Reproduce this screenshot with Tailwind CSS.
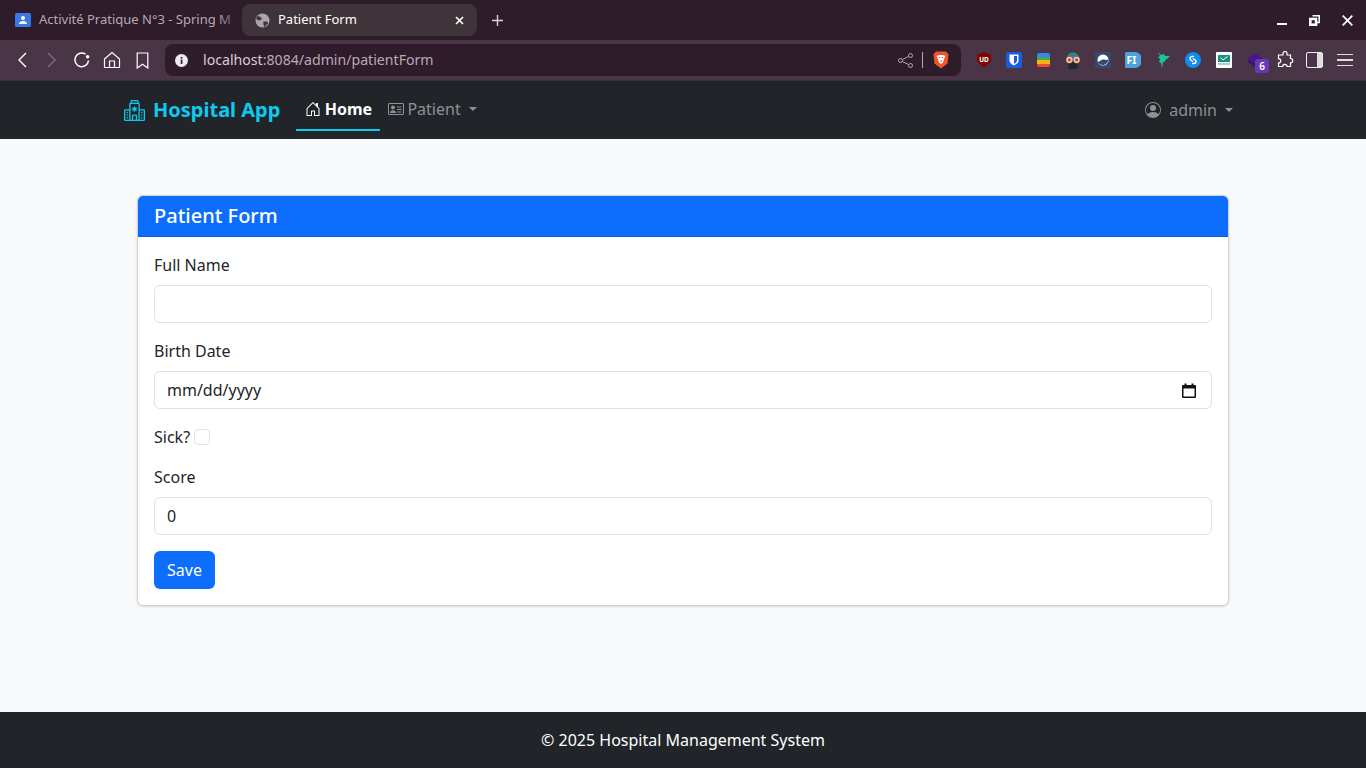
<!DOCTYPE html>
<html lang="en">
<head>
    <meta charset="UTF-8">
    <title>Patient Form</title>
    <script src="https://cdn.jsdelivr.net/npm/@tailwindcss/browser@4"></script>
</head>
<body class="h-[768px] w-[1366px] overflow-hidden flex flex-col bg-[#f8f9fa] font-['Noto_Sans',sans-serif] text-[#212529]">

    <!-- Tab strip -->
    <div class="h-10 bg-[#2e1c2b] flex items-center pl-[15px] shrink-0">
        <div class="relative w-[227px] flex items-center text-[13px] text-[#b5a9b3]">
            <svg class="w-4 h-4 shrink-0 mr-2" viewBox="0 0 16 16"><rect y="1" width="16" height="14" rx="1.5" fill="#3b78e7"/><circle cx="8" cy="6" r="2" fill="#fff"/><path d="M4 12c0-2 2-3 4-3s4 1 4 3z" fill="#fff"/></svg>
            <span class="whitespace-nowrap">Activité Pratique N°3 - Spring M</span>
            <div class="absolute right-0 top-0 bottom-0 w-[24px] bg-linear-to-r from-transparent to-[#2e1c2b]"></div>
        </div>
        <div class="w-[235px] h-8 bg-[#3f3439] rounded-lg flex items-center px-[13px] text-[13px] text-white">
            <svg class="w-[15px] h-[15px] shrink-0 mr-[8px]" viewBox="0 0 16 16"><circle cx="8" cy="8" r="7.5" fill="#a9a5a8"/><path d="M3 3l4 2 0 2-3 1-3-2zM9 9l4 0 1 2-4 4-1-3z" fill="#3f3439"/></svg>
            <span class="flex-1">Patient Form</span>
            <svg class="w-[9px] h-[9px]" viewBox="0 0 9 9" stroke="#fff" stroke-width="1.7"><path d="M1 1l7 7M8 1l-7 7"/></svg>
        </div>
        <svg class="w-[11px] h-[11px] ml-[15px]" viewBox="0 0 11 11" stroke="#d8d2d6" stroke-width="1.4"><path d="M5.5 0v11M0 5.500h11"/></svg>
        <div class="ml-auto flex items-center gap-[22px] pr-[13px]">
            <div class="w-[10px] h-[2px] bg-white mt-[7px]"></div>
            <svg class="w-[11px] h-[11px]" viewBox="0 0 11 11" fill="none" stroke="#fff" stroke-width="1.6"><path d="M3.5.8h6.700v6.700H7.500"/><rect x=".8" y="3.500" width="6.700" height="6.700" fill="#fff" stroke="#fff"/><rect x="2.600" y="5.200" width="3.200" height="3.200" fill="#2e1c2b" stroke="none"/></svg>
            <svg class="w-[11px] h-[11px]" viewBox="0 0 11 11" stroke="#fff" stroke-width="1.8"><path d="M.7.7l9.600 9.600M10.300.7L.7 10.300"/></svg>
        </div>
    </div>

    <!-- Toolbar -->
    <div class="bg-[#4a3547] flex items-center pl-[17px] shrink-0 border-b border-[#3a3039] box-content h-[40px]">
        <svg class="w-[10px] h-[16px]" viewBox="0 0 10 16" fill="none" stroke="#fff" stroke-width="1.4"><path d="M9 1L2 8l7 7"/></svg>
        <svg class="w-[10px] h-[16px] ml-[20px]" viewBox="0 0 10 16" fill="none" stroke="#7f6c7c" stroke-width="1.4"><path d="M1 1l7 7-7 7"/></svg>
        <svg class="w-[18px] h-[18px] ml-[16px]" viewBox="0 0 18 18" fill="none" stroke="#fff" stroke-width="1.5"><path d="M15.500 9.500A6.800 6.800 0 1 1 12.500 3.200"/><circle cx="14.600" cy="5.800" r="1.800" fill="#fff" stroke="none"/></svg>
        <svg class="w-[18px] h-[18px] ml-[12px]" viewBox="0 0 18 18" fill="none" stroke="#fff" stroke-width="1.2"><path d="M1.500 8L9 1.500 16.500 8v8.500h-15zM6.500 16.500v-6.500h5v6.500"/></svg>
        <svg class="w-[13px] h-[17px] ml-[15px]" viewBox="0 0 13 17" fill="none" stroke="#fff" stroke-width="1.2"><path d="M1.200 1h10.600v15l-5.300-3.800-5.300 3.800z"/></svg>
        <!-- Address bar -->
        <div class="w-[796px] h-8 ml-[16px] bg-[#2e1c2b] rounded-lg flex items-center pl-[10px] pr-[12px]">
            <svg class="w-[13px] h-[13px]" viewBox="0 0 13 13"><circle cx="6.500" cy="6.500" r="6.500" fill="#f0e8ee"/><rect x="5.700" y="5.500" width="1.700" height="4.500" fill="#2e1c2b"/><rect x="5.700" y="3" width="1.700" height="1.600" fill="#2e1c2b"/></svg>
            <span class="ml-[15px] text-[14.130px] text-[#d9cdd6] flex-1">localhost<span class="text-[#b9aab5]">:8084/admin/patientForm</span></span>
            <svg class="w-[15px] h-[15px]" viewBox="0 0 15 15" fill="none" stroke="#b4a6b0" stroke-width="1"><circle cx="2.500" cy="7.500" r="2"/><circle cx="12.500" cy="2.500" r="2"/><circle cx="12.500" cy="12.500" r="2"/><path d="M4.300 6.600l6.400-3.200M4.300 8.400l6.400 3.200"/></svg>
            <div class="w-px h-4 bg-[#b4a6b0] ml-[9px] mr-[10px]"></div>
            <svg class="w-[16px] h-[18px]" viewBox="0 0 16 18"><path d="M3 .5h10l2.500 3-1 9L8 17.500 1.500 12.500l-1-9z" fill="#f1562b"/><path d="M3.500 5l2.500-1h4l2.500 1-1.500 3-1 3.500-2 1.500-2-1.500-1-3.500z" fill="#fff"/><path d="M6 6.500h1.200M8.800 6.500H10M7 10h2" stroke="#f1562b" stroke-width="1"/></svg>
        </div>
        <!-- Extensions -->
        <div class="flex items-center ml-[15px] h-full">
            <svg class="w-4 h-4" viewBox="0 0 16 16"><path d="M8 0l7 2.500v7L8 16 1 9.500v-7z" fill="#800404"/><text x="8" y="10" font-size="6.500" font-weight="700" fill="#fff" text-anchor="middle" font-family="Noto Sans">UD</text></svg>
            <svg class="w-4 h-4 ml-[14px]" viewBox="0 0 16 16"><rect width="16" height="16" rx="2" fill="#175ddc"/><path d="M3.500 2.500h9v6c0 2.500-2.500 4-4.500 5-2-1-4.500-2.500-4.500-5z" fill="#fff"/><path d="M8 4h3v4.500c0 1.500-1.500 2.500-3 3.300z" fill="#175ddc"/></svg>
            <div class="w-[13px] h-[14px] ml-[15px] flex flex-col rounded-[2px] overflow-hidden">
                <div class="flex-1 bg-[#3b82f6]"></div><div class="flex-1 bg-[#3fae49]"></div><div class="flex-1 bg-[#f5b31a]"></div><div class="flex-1 bg-[#ef4a35]"></div>
            </div>
            <svg class="w-[18px] h-[18px] ml-[14px]" viewBox="0 0 16 16"><path d="M2 8a6 7 0 0 1 12 0z" fill="#3b7f8c"/><rect x="4" y="10" width="8" height="6" rx="1" fill="#23282c"/><circle cx="4.800" cy="8" r="2.800" fill="#f3c2a8"/><circle cx="11.200" cy="8" r="2.800" fill="#f3c2a8"/><circle cx="4.800" cy="8" r="1.300" fill="#c83c2a"/><circle cx="11.200" cy="8" r="1.300" fill="#c83c2a"/></svg>
            <svg class="w-4 h-4 ml-[13px]" viewBox="0 0 16 16"><rect width="16" height="16" rx="1" fill="#34496e"/><circle cx="8" cy="8" r="5.500" fill="#fff"/><path d="M2.800 9.500c2 1 3-2 5.500-2 2 0 2.500 1 5 0-.3 3-2.500 5.500-5.300 5.500S3.300 11.500 2.800 9.500z" fill="#34496e"/></svg>
            <svg class="w-4 h-4 ml-[14px]" viewBox="0 0 16 16"><path d="M1.500 0H10a7 8 0 0 1 0 16H1.500A1.500 1.500 0 0 1 0 14.500v-13A1.500 1.500 0 0 1 1.500 0z" fill="#4aa3e0"/><text x="6.500" y="12" font-size="10.500" font-weight="700" fill="#fff" text-anchor="middle" font-family="Noto Sans">FI</text></svg>
            <svg class="w-4 h-4 ml-[14px]" viewBox="0 0 16 16"><path d="M3 0l3 3 3-1 1 2 5 0-3 3-2 1 1 1-3 1-1 6-1-5-2-1 1-3-2-2 2-1z" fill="#16c79a"/></svg>
            <svg class="w-4 h-4 ml-[14px]" viewBox="0 0 16 16"><circle cx="8" cy="8" r="8" fill="#0f8cf0"/><path d="M9 4.500H7a2 2 0 0 0-1.500 3.300L8 9.500M7 11.500h2a2 2 0 0 0 1.500-3.300L8 6.500" fill="none" stroke="#fff" stroke-width="1.500"/></svg>
            <svg class="w-4 h-4 ml-[15px]" viewBox="0 0 16 16"><rect width="16" height="16" rx="1" fill="#fff"/><rect x="2" y="3" width="12" height="7" fill="#1b8f80"/><path d="M4.500 5.500l2.500 2.500 4.500-3.500" fill="none" stroke="#fff" stroke-width="1"/><rect x="2" y="11" width="12" height="2" fill="#9fd6cc"/></svg>
            <div class="relative w-4 h-4 ml-[15px]">
                <svg class="w-4 h-4" viewBox="0 0 16 16"><path d="M8 1l7 5-7 5-7-5z" fill="#4a148c"/><path d="M1 7l7 5 7-5v3l-7 5-7-5z" fill="#3a1080"/></svg>
                <div class="absolute left-[8px] top-[7px] w-[14px] h-[14px] bg-[#6639ba] rounded-[3px] text-white text-[10px] font-semibold flex items-center justify-center leading-none">6</div>
            </div>
        </div>
        <svg class="w-[18px] h-[18px] ml-[13px]" viewBox="0 0 18 18" fill="none" stroke="#fff" stroke-width="1.200"><path d="M7 2.500a2 2 0 0 1 4 0V4h3.500v3.500a2.200 2.200 0 0 1 0 4.400V15.500H11a2.200 2.200 0 0 0-4.400 0H2.500V12a2.200 2.200 0 0 0 0-4.400V4H7z"/></svg>
        <div class="w-[17px] h-[16px] ml-[12px] border-[1.500px] border-[#eee] rounded-[2px] flex justify-end"><div class="w-[5px] h-full bg-[#ddd]"></div></div>
        <div class="ml-[14px] w-4 flex flex-col gap-[4px]">
            <div class="h-[1.500px] bg-[#ddd]"></div><div class="h-[1.500px] bg-[#ddd]"></div><div class="h-[1.500px] bg-[#ddd]"></div>
        </div>
    </div>

    <!-- Navbar -->
    <nav class="h-[58px] bg-[#212529] flex items-center pl-[124px] shrink-0">
        <svg class="w-[21px] h-[21px] text-[#0dcaf0]" viewBox="0 0 16 16" fill="currentColor"><path d="M8.500 5.034v1.100l.953-.55.5.867L9 7l.953.55-.5.866-.953-.55v1.100h-1v-1.100l-.953.55-.5-.866L7 7l-.953-.55.5-.866.953.55v-1.100zM13.250 9a.250.250 0 0 0-.250.250v.500c0 .138.112.250.250.250h.500a.250.250 0 0 0 .250-.250v-.500a.250.250 0 0 0-.250-.250zM13 11.250a.250.250 0 0 1 .250-.250h.500a.250.250 0 0 1 .250.250v.500a.250.250 0 0 1-.250.250h-.500a.250.250 0 0 1-.250-.250zm.250 1.750a.250.250 0 0 0-.250.250v.500c0 .138.112.250.250.250h.500a.250.250 0 0 0 .250-.250v-.500a.250.250 0 0 0-.250-.250zm-11-4a.250.250 0 0 0-.250.250v.500c0 .138.112.250.250.250h.500A.250.250 0 0 0 3 9.750v-.500A.250.250 0 0 0 2.750 9zm0 2a.250.250 0 0 0-.250.250v.500c0 .138.112.250.250.250h.500a.250.250 0 0 0 .250-.250v-.500a.250.250 0 0 0-.250-.250zM2 13.250a.250.250 0 0 1 .250-.250h.500a.250.250 0 0 1 .250.250v.500a.250.250 0 0 1-.250.250h-.500a.250.250 0 0 1-.250-.250z"/><path d="M5 1a1 1 0 0 1 1-1h4a1 1 0 0 1 1 1v1a1 1 0 0 1 1 1v4h3a1 1 0 0 1 1 1v7a1 1 0 0 1-1 1H1a1 1 0 0 1-1-1V8a1 1 0 0 1 1-1h3V3a1 1 0 0 1 1-1zm2 14h2v-3H7zm3 0h1V3H5v12h1v-3a1 1 0 0 1 1-1h2a1 1 0 0 1 1 1zm0-14H6v1h4zm2 7v7h3V8zm-8 7V8H1v7z"/></svg>
        <span class="ml-[8px] text-xl font-bold text-[#0dcaf0] whitespace-nowrap">Hospital App</span>
        <a class="ml-4 h-[42px] w-[84px] flex items-center justify-center gap-[4px] border-b-2 border-[#0dcaf0] text-white font-bold -mt-[1px]">
            <svg class="w-4 h-4" viewBox="0 0 16 16" fill="currentColor"><path d="M8.354 1.146a.500.500 0 0 0-.708 0l-6 6A.500.500 0 0 0 1.500 7.500v7a.500.500 0 0 0 .500.500h4.500a.500.500 0 0 0 .500-.500v-4h2v4a.500.500 0 0 0 .500.500H14a.500.500 0 0 0 .500-.500v-7a.500.500 0 0 0-.146-.354L13 5.793V2.500a.500.500 0 0 0-.500-.500h-1a.500.500 0 0 0-.500.500v1.293zM2.500 14V7.707l5.500-5.500 5.500 5.500V14H10v-4a.500.500 0 0 0-.500-.500h-3a.500.500 0 0 0-.500.500v4z"/></svg>
            Home
        </a>
        <a class="ml-[8px] flex items-center text-[#8e9092] -mt-[2px]">
            <svg class="w-4 h-4 mr-[3px]" viewBox="0 0 16 16" fill="currentColor"><circle cx="5" cy="6.500" r="2"/><path d="M2 12c0-1.500 1.200-2.700 3-2.700S8 10.500 8 12z"/><path d="M9 5.500h4.500v1H9zM9 8h4.500v1H9zM9 10.500h4.500v1H9z"/><path d="M14.500 3a.500.500 0 0 1 .500.500v9a.500.500 0 0 1-.500.500h-13a.500.500 0 0 1-.500-.500v-9a.500.500 0 0 1 .500-.500zm-13-1A1.500 1.500 0 0 0 0 3.500v9A1.500 1.500 0 0 0 1.500 14h13a1.500 1.500 0 0 0 1.500-1.500v-9A1.500 1.500 0 0 0 14.500 2z"/></svg>
            Patient
            <span class="ml-[8px] w-0 h-0 border-x-[4.800px] border-x-transparent border-t-[4.800px] border-t-[#8e9092]"></span>
        </a>
        <a class="ml-auto mr-[133px] flex items-center text-[#8e9092]">
            <svg class="w-4 h-4 mr-[8px]" viewBox="0 0 16 16" fill="currentColor"><path d="M11 6a3 3 0 1 1-6 0 3 3 0 0 1 6 0"/><path fill-rule="evenodd" d="M0 8a8 8 0 1 1 16 0A8 8 0 0 1 0 8m8-7a7 7 0 0 0-5.468 11.370C3.242 11.226 4.805 10 8 10s4.757 1.225 5.468 2.370A7 7 0 0 0 8 1"/></svg>
            admin
            <span class="ml-[8px] w-0 h-0 border-x-[4.800px] border-x-transparent border-t-[4.800px] border-t-[#8e9092]"></span>
        </a>
    </nav>

    <!-- Main -->
    <main class="flex-1 pt-14 px-[137px]">
        <div class="bg-white border border-[#cfd1d4] rounded-md shadow-sm h-[411px] overflow-hidden">
            <div class="h-[41px] bg-[#0d6efd] text-white text-xl font-medium flex items-center px-4 border-b border-[#0b5ed7]">Patient Form</div>
            <form class="px-4 pt-4">
                <label class="block h-6 leading-6 mb-2">Full Name</label>
                <input type="text" class="block w-full h-[38px] px-3 border border-[#dee2e6] rounded-md bg-white">
                <label class="block h-6 leading-6 mt-4 mb-2">Birth Date</label>
                <div class="w-full h-[38px] pl-3 pr-[15px] border border-[#dee2e6] rounded-md flex items-center justify-between">
                    <span>mm/dd/yyyy</span>
                    <svg class="w-[14px] h-[15px]" viewBox="0 0 14 15"><path d="M0 3a1 1 0 0 1 1-1h1.500V.5h2V2h5V.5h2V2H13a1 1 0 0 1 1 1v11a1 1 0 0 1-1 1H1a1 1 0 0 1-1-1zm1.500 2.500v8h11v-8z" fill="#111"/></svg>
                </div>
                <div class="h-6 mt-4 flex items-center">
                    <span>Sick?</span>
                    <span class="ml-1 w-4 h-4 border border-[#dee2e6] rounded-[4px] bg-white"></span>
                </div>
                <label class="block h-6 leading-6 mt-4 mb-2">Score</label>
                <div class="w-full h-[38px] px-3 border border-[#dee2e6] rounded-md flex items-center">0</div>
                <button type="button" class="mt-4 block w-[61px] h-[38px] bg-[#0d6efd] text-white rounded-md">Save</button>
            </form>
        </div>
    </main>

    <!-- Footer -->
    <footer class="h-14 bg-[#212529] text-white flex items-center justify-center shrink-0">© 2025 Hospital Management System</footer>
</body>
</html>
